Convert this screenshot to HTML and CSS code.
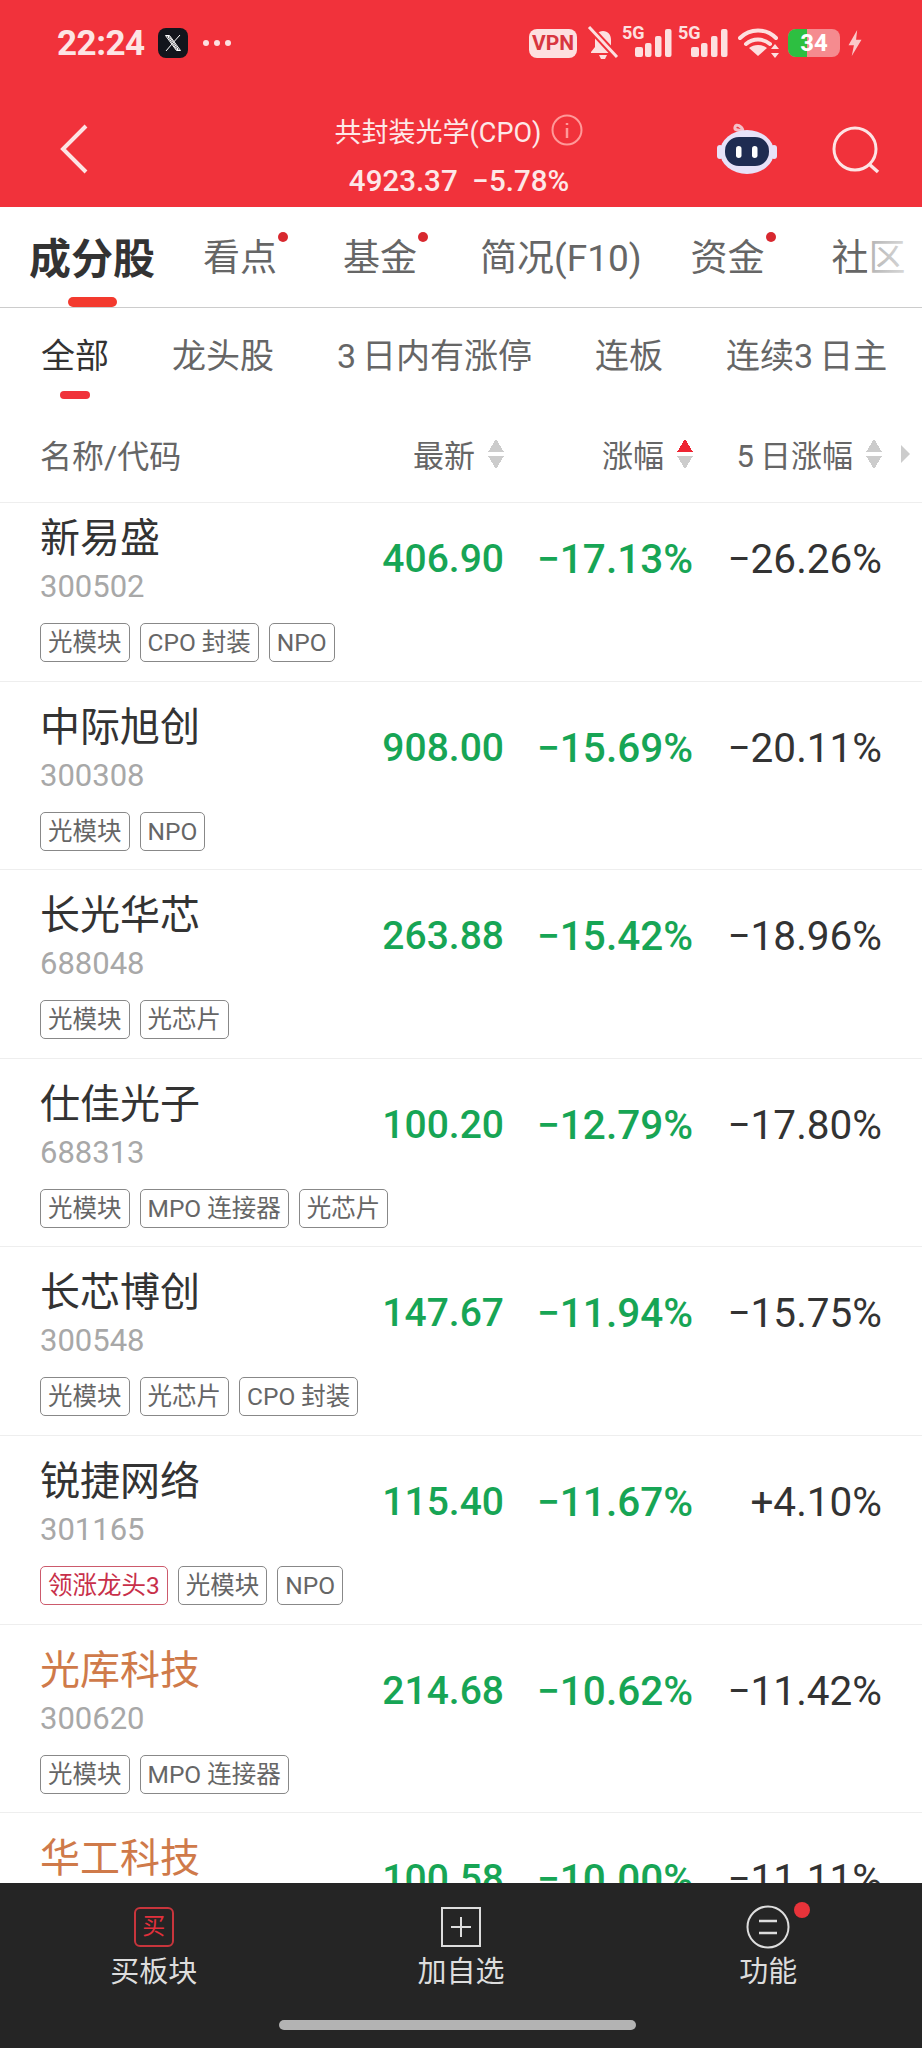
FILE: index.html
```html
<!DOCTYPE html>
<html lang="zh-CN">
<head>
    <meta charset="UTF-8">
    <meta name="viewport" content="width=device-width, initial-scale=1.0">
    <title>共封装光学(CPO)</title>
    <link rel="stylesheet" href="styles.css">
</head>
<body>

<div class="top">
    <!-- Status bar -->
    <div class="status">
        <span class="time">22:24</span>
        <span class="x-icon">
            <svg width="18" height="18" viewBox="0 0 18 18"><path d="M1.500 1.500h4l11 15h-4zM3.800 2.500l8.900 13h1.500L5.300 2.500zM16 1l-6.300 7M7.800 10.200 2 17" fill="none" stroke="#fff" stroke-width="1"/></svg>
        </span>
        <span class="more">
            <i></i><i></i><i></i>
        </span>
        <div class="status-right">
            <span class="vpn">VPN</span>
            <svg class="bell" width="32" height="34" viewBox="0 0 32 34">
                <path d="M16 5c-5 0-8 3.500-8 9v7l-4 5v1h24v-1l-4-5v-7c0-5.500-3-9-8-9z" fill="#fde0e0"/>
                <path d="M12 29h8l-2 4h-4z" fill="#fde0e0"/>
                <path d="M1 0 31 32" stroke="#f1323b" stroke-width="7"/>
                <path d="M2 1 30 31" stroke="#fde0e0" stroke-width="3"/>
            </svg>
            <svg class="signal" width="50" height="34" viewBox="0 0 50 34">
                <text x="0" y="13" class="five-g">5G</text>
                <rect x="13" y="21" width="8" height="10" rx="2"/>
                <rect x="23" y="17" width="6.500" height="14" rx="2"/>
                <rect x="33" y="10" width="6.500" height="21" rx="2"/>
                <rect x="43" y="3" width="6.500" height="28" rx="2"/>
            </svg>
            <svg class="signal" width="50" height="34" viewBox="0 0 50 34">
                <text x="0" y="13" class="five-g">5G</text>
                <rect x="13" y="21" width="8" height="10" rx="2"/>
                <rect x="23" y="17" width="6.500" height="14" rx="2"/>
                <rect x="33" y="10" width="6.500" height="21" rx="2"/>
                <rect x="43" y="3" width="6.500" height="28" rx="2"/>
            </svg>
            <svg class="wifi" width="42" height="30" viewBox="0 0 42 30">
                <path d="M2 10C12 0 28 0 38 10M8 16c7-6 17-6 24 0" fill="none" stroke="#fde0e0" stroke-width="4" stroke-linecap="round"/>
                <path d="M20 28 11 20c5-4 13-4 18 0z" fill="#fde0e0"/>
                <path d="M37 16l4 5h-8zM37 30l4-5h-8z" fill="#fde0e0"/>
            </svg>
            <div class="battery">
                <span class="battery-level"></span>
                <span class="battery-num">34</span>
            </div>
            <svg class="bolt" width="16" height="26" viewBox="0 0 14 24"><path d="M9 0 1 14h5l-2 10 9-15H8z" fill="#fbc8c8"/></svg>
        </div>
    </div>

    <!-- Title bar -->
    <div class="nav">
        <svg class="back" width="28" height="50" viewBox="0 0 28 50"><path d="M26 2 3 25l23 23" fill="none" stroke="#fde4e4" stroke-width="4"/></svg>
        <div class="title">
            <div class="title-name">共封装光学(CPO)
                <svg class="info" width="32" height="32" viewBox="0 0 32 32">
                    <circle cx="16" cy="16" r="14.500" fill="none" stroke="#f99" stroke-width="2"/>
                    <path d="M16 9v2M16 14v10" stroke="#f99" stroke-width="2.500"/>
                </svg>
            </div>
            <div class="title-value">4923.37 &nbsp;−5.78%</div>
        </div>
        <div class="nav-right">
            <svg class="robot" width="64" height="56" viewBox="0 0 64 56">
                <path d="M27 12c-1-5-7-8-8-4s5 3 8 4" fill="none" stroke="#f4c0c8" stroke-width="3"/>
                <rect x="1" y="26" width="6" height="14" rx="3" fill="#e7e2f8"/>
                <rect x="55" y="26" width="6" height="14" rx="3" fill="#e7e2f8"/>
                <ellipse cx="31" cy="33" rx="27" ry="22" fill="#e7e2f8"/>
                <rect x="9" y="18" width="44" height="29" rx="14" fill="#1f2c52"/>
                <rect x="20" y="27" width="5.500" height="12" rx="2.750" fill="#fff"/>
                <rect x="36" y="27" width="5.500" height="12" rx="2.750" fill="#fff"/>
            </svg>
            <svg class="search" width="50" height="50" viewBox="0 0 50 50">
                <circle cx="23" cy="23" r="21" fill="none" stroke="#fde4e4" stroke-width="3"/>
                <path d="M37 38l9 8" stroke="#fde4e4" stroke-width="3.500"/>
            </svg>
        </div>
    </div>
</div>

<!-- Main tabs -->
<div class="tabs">
    <div class="tab tab-active">成分股</div>
    <div class="tab tab-dot">看点</div>
    <div class="tab tab-dot">基金</div>
    <div class="tab">简况(F10)</div>
    <div class="tab tab-dot">资金</div>
    <div class="tab">社区</div>
    <div class="tabs-fade"></div>
</div>

<div class="subtabs">
    <div class="subtab subtab-active">全部</div>
    <div class="subtab">龙头股</div>
    <div class="subtab"><span class="digit">3</span>日内有涨停</div>
    <div class="subtab">连板</div>
    <div class="subtab">连续<span class="digit">3</span>日主</div>
</div>

<!-- Column headers -->
<div class="head">
    <div class="head-name">名称/代码</div>
    <div class="head-col">最新<span class="sort"></span></div>
    <div class="head-col">涨幅<span class="sort sort-up"></span></div>
    <div class="head-col"><div><span class="digit">5</span>日涨幅</div><span class="sort"></span></div>
    <span class="head-more"></span>
</div>

<div class="list">
    <div class="row">
        <div class="stock">
            <div class="name">新易盛</div>
            <div class="code">300502</div>
            <div class="tags"><span class="tag">光模块</span><span class="tag">CPO 封装</span><span class="tag">NPO</span></div>
        </div>
        <div class="num price">406.90</div>
        <div class="num pct">−17.13%</div>
        <div class="num pct5">−26.26%</div>
    </div>
    <div class="row">
        <div class="stock">
            <div class="name">中际旭创</div>
            <div class="code">300308</div>
            <div class="tags"><span class="tag">光模块</span><span class="tag">NPO</span></div>
        </div>
        <div class="num price">908.00</div>
        <div class="num pct">−15.69%</div>
        <div class="num pct5">−20.11%</div>
    </div>
    <div class="row">
        <div class="stock">
            <div class="name">长光华芯</div>
            <div class="code">688048</div>
            <div class="tags"><span class="tag">光模块</span><span class="tag">光芯片</span></div>
        </div>
        <div class="num price">263.88</div>
        <div class="num pct">−15.42%</div>
        <div class="num pct5">−18.96%</div>
    </div>
    <div class="row">
        <div class="stock">
            <div class="name">仕佳光子</div>
            <div class="code">688313</div>
            <div class="tags"><span class="tag">光模块</span><span class="tag">MPO 连接器</span><span class="tag">光芯片</span></div>
        </div>
        <div class="num price">100.20</div>
        <div class="num pct">−12.79%</div>
        <div class="num pct5">−17.80%</div>
    </div>
    <div class="row">
        <div class="stock">
            <div class="name">长芯博创</div>
            <div class="code">300548</div>
            <div class="tags"><span class="tag">光模块</span><span class="tag">光芯片</span><span class="tag">CPO 封装</span></div>
        </div>
        <div class="num price">147.67</div>
        <div class="num pct">−11.94%</div>
        <div class="num pct5">−15.75%</div>
    </div>
    <div class="row">
        <div class="stock">
            <div class="name">锐捷网络</div>
            <div class="code">301165</div>
            <div class="tags"><span class="tag tag-red">领涨龙头3</span><span class="tag">光模块</span><span class="tag">NPO</span></div>
        </div>
        <div class="num price">115.40</div>
        <div class="num pct">−11.67%</div>
        <div class="num pct5">+4.10%</div>
    </div>
    <div class="row">
        <div class="stock">
            <div class="name name-hot">光库科技</div>
            <div class="code">300620</div>
            <div class="tags"><span class="tag">光模块</span><span class="tag">MPO 连接器</span></div>
        </div>
        <div class="num price">214.68</div>
        <div class="num pct">−10.62%</div>
        <div class="num pct5">−11.42%</div>
    </div>
    <div class="row">
        <div class="stock">
            <div class="name name-hot">华工科技</div>
        </div>
        <div class="num price">100.58</div>
        <div class="num pct">−10.00%</div>
        <div class="num pct5">−11.11%</div>
    </div>
</div>

<!-- Bottom bar -->
<div class="bottom">
    <div class="bottom-items">
        <div class="bottom-item">
            <div class="buy-icon">买</div>
            <div class="bottom-label">买板块</div>
        </div>
        <div class="bottom-item">
            <svg class="bottom-icon" width="40" height="40" viewBox="0 0 40 40">
                <rect x="1" y="1" width="38" height="38" fill="none" stroke="#ddd" stroke-width="2"/>
                <path d="M20 10v20M10 20h20" stroke="#ddd" stroke-width="2"/>
            </svg>
            <div class="bottom-label">加自选</div>
        </div>
        <div class="bottom-item bottom-item-dot">
            <svg class="bottom-icon bottom-icon-round" width="44" height="44" viewBox="0 0 44 44">
                <circle cx="22" cy="22" r="20.500" fill="none" stroke="#ddd" stroke-width="2"/>
                <path d="M13 16h18M13 28h18" stroke="#ddd" stroke-width="2.500"/>
            </svg>
            <div class="bottom-label">功能</div>
        </div>
    </div>
    <div class="home-pill"></div>
</div>

</body>
</html>
```

FILE: styles.css
```css
* {
    box-sizing: border-box;
}
body {
    margin: 0;
    width: 922px;
    height: 2048px;
    overflow: hidden;
    display: flex;
    flex-direction: column;
    background-color: #fff;
    font-family: Roboto, "Noto Sans CJK SC", sans-serif;
    color: #333;
}
.digit {
    margin-right: 6px;
}

/* Red header */
.top {
    height: 207px;
    flex: none;
    background-color: #f1323b;
    color: #fde8e8;
}
.status {
    height: 86px;
    display: flex;
    align-items: center;
    padding: 0 59px 0 57px;
}
.time {
    font-size: 35px;
    font-weight: 700;
    letter-spacing: -0.5px;
    color: #fde4e4;
}
.x-icon {
    width: 30px;
    height: 30px;
    margin-left: 13px;
    border-radius: 8px;
    background-color: #12151c;
    display: flex;
    align-items: center;
    justify-content: center;
}
.more {
    display: flex;
    gap: 5px;
    margin-left: 15px;
}
.more i {
    width: 6px;
    height: 6px;
    border-radius: 50%;
    background-color: #fde0e0;
}
.status-right {
    margin-left: auto;
    display: flex;
    align-items: center;
}
.vpn {
    width: 48px;
    height: 29px;
    border-radius: 8px;
    background-color: #fde0e0;
    color: #d8353f;
    font-size: 21px;
    font-weight: 700;
    line-height: 29px;
    text-align: center;
}
.bell {
    margin-left: 10px;
}
.signal {
    margin-left: 3px;
    fill: #fde0e0;
    overflow: visible;
}
.signal + .signal {
    margin-left: 6px;
}
.five-g {
    font-family: Roboto, sans-serif;
    font-size: 18px;
    font-weight: 700;
}
.wifi {
    margin-left: 10px;
}
.battery {
    position: relative;
    width: 52px;
    height: 28px;
    margin-left: 8px;
    border-radius: 8px;
    background-color: #f58b8f;
    overflow: hidden;
}
.battery-level {
    position: absolute;
    left: 0;
    top: 0;
    bottom: 0;
    width: 19px;
    background-color: #2dbf41;
}
.battery-num {
    position: absolute;
    left: 0;
    right: 0;
    top: 0;
    text-align: center;
    font-size: 24px;
    font-weight: 700;
    line-height: 28px;
    color: #fff;
}
.bolt {
    margin-left: 7px;
}

.nav {
    height: 121px;
    display: grid;
    grid-template-columns: 200px 1fr 200px;
    align-items: start;
}
.back {
    margin: 38px 0 0 60px;
}
.title {
    padding: 26px 4px 0 0;
    text-align: center;
}
.title-name {
    height: 36px;
    display: flex;
    align-items: center;
    justify-content: center;
    gap: 10px;
    font-size: 27px;
}
.title-value {
    margin-top: 15px;
    font-size: 29.5px;
    font-weight: 500;
    line-height: 36px;
}
.nav-right {
    display: flex;
    align-items: flex-start;
    padding: 33px 0 0 0;
}
.robot {
    margin: 0 0 0 -6px;
}
.search {
    margin: 7px 0 0 52px;
}

/* Tabs */
.tabs {
    position: relative;
    flex: none;
    height: 101px;
    display: flex;
    padding-left: 29px;
    border-bottom: 1.5px solid #ccc;
    overflow: hidden;
}
.tab {
    position: relative;
    display: flex;
    align-items: center;
    flex: none;
    padding-bottom: 4px;
    font-size: 37px;
    color: #666;
}
.tab:nth-child(2) { margin-left: 48px; }
.tab:nth-child(3) { margin-left: 66px; }
.tab:nth-child(4) { margin-left: 63px; }
.tab:nth-child(5) { margin-left: 49px; }
.tab:nth-child(6) { margin-left: 67px; }
.tab-active {
    font-size: 42px;
    font-weight: 700;
    color: #333;
}
.tab-active::after {
    content: "";
    position: absolute;
    left: 39px;
    bottom: 0;
    width: 49px;
    height: 10px;
    border-radius: 5px;
    background-color: #f33a2e;
}
.tab-dot::after {
    content: "";
    position: absolute;
    right: -11px;
    top: 25px;
    width: 10px;
    height: 10px;
    border-radius: 50%;
    background-color: #d8282f;
}
.tabs-fade {
    position: absolute;
    right: 0;
    top: 0;
    bottom: 0;
    width: 55px;
    background: linear-gradient(to right, rgba(255,255,255,0.5), rgba(255,255,255,0.85));
}

.subtabs {
    flex: none;
    height: 100px;
    display: flex;
    gap: 63px;
    padding: 0 0 0 41px;
    overflow: hidden;
}
.subtab {
    position: relative;
    flex: none;
    font-size: 34px;
    line-height: 96px;
    color: #666;
}
.subtab-active {
    color: #333;
}
.subtab-active::after {
    content: "";
    position: absolute;
    left: 19px;
    top: 83px;
    width: 30px;
    height: 8px;
    border-radius: 4px;
    background-color: #f0323a;
}

/* Column headers */
.head {
    flex: none;
    height: 95px;
    display: flex;
    align-items: center;
    padding: 0 12px 3px 40px;
    border-bottom: 1.5px solid #eee;
    font-size: 31px;
    color: #666;
}
.head-name {
    flex: 1;
    font-size: 32px;
}
.head-col {
    display: flex;
    align-items: center;
    justify-content: flex-end;
    gap: 13px;
    width: 189px;
}
.sort {
    width: 16px;
    height: 30px;
    flex: none;
    background:
        linear-gradient(to top right, transparent 50%, #ccc 50%) 0 100% / 8px 13px no-repeat,
        linear-gradient(to top left, transparent 50%, #ccc 50%) 100% 100% / 8px 13px no-repeat,
        linear-gradient(to bottom right, transparent 50%, #ccc 50%) 0 0 / 8px 13px no-repeat,
        linear-gradient(to bottom left, transparent 50%, #ccc 50%) 100% 0 / 8px 13px no-repeat;
}
.sort-up {
    background:
        linear-gradient(to top right, transparent 50%, #ccc 50%) 0 100% / 8px 13px no-repeat,
        linear-gradient(to top left, transparent 50%, #ccc 50%) 100% 100% / 8px 13px no-repeat,
        linear-gradient(to bottom right, transparent 50%, #ee2533 50%) 0 0 / 8px 13px no-repeat,
        linear-gradient(to bottom left, transparent 50%, #ee2533 50%) 100% 0 / 8px 13px no-repeat;
}
.head-more {
    flex: none;
    margin-left: 19px;
    width: 0;
    height: 0;
    border-left: 9px solid #ccc;
    border-top: 9px solid transparent;
    border-bottom: 9px solid transparent;
}

/* Stock rows */
.list {
    flex: 1;
    min-height: 0;
    overflow: hidden;
}
.row {
    height: 188.6px;
    display: flex;
    padding: 0 40px;
    border-bottom: 1.5px solid #eee;
}
.row:first-child {
    margin-top: -10px;
}
.stock {
    flex: 1;
    min-width: 0;
    padding-top: 24px;
}
.name {
    font-size: 40px;
    line-height: 44px;
    color: #333;
}
.name-hot {
    color: #cf7a4a;
}
.code {
    margin-top: 8px;
    font-size: 31px;
    line-height: 36px;
    color: #a8a8a8;
}
.tags {
    display: flex;
    gap: 10px;
    margin-top: 18px;
}
.tag {
    height: 39px;
    padding: 0 7px;
    border: 1px solid #888;
    border-radius: 5px;
    font-size: 24.5px;
    line-height: 37px;
    color: #666;
    white-space: nowrap;
}
.tag-red {
    border-color: #cc5a6c;
    color: #c8304a;
}
.num {
    flex: none;
    width: 189px;
    margin-top: 44px;
    font-size: 39px;
    font-weight: 500;
    line-height: 44px;
    text-align: right;
    color: #333;
}
.pct, .pct5 {
    font-size: 40.5px;
}
.price, .pct {
    color: #17a555;
}
.pct5 {
    font-weight: 400;
}

/* Bottom bar */
.bottom {
    flex: none;
    height: 165px;
    background-color: #252525;
}
.bottom-items {
    display: grid;
    grid-template-columns: repeat(3, 1fr);
    height: 134px;
    padding-top: 24px;
}
.bottom-item {
    position: relative;
    display: flex;
    flex-direction: column;
    align-items: center;
}
.bottom-icon-round {
    margin: -2px 0;
}
.bottom-item-dot::after {
    content: "";
    position: absolute;
    left: 179px;
    top: -5px;
    width: 16px;
    height: 16px;
    border-radius: 50%;
    background-color: #e8333a;
}
.buy-icon {
    width: 40px;
    height: 40px;
    border: 2px solid #c8353c;
    border-radius: 6px;
    font-size: 23px;
    line-height: 35px;
    text-align: center;
    color: #e2303c;
}
.bottom-label {
    margin-top: 7px;
    font-size: 29px;
    line-height: 36px;
    color: #ddd;
}
.home-pill {
    width: 357px;
    height: 10px;
    margin: 3px 0 0 279px;
    border-radius: 5px;
    background-color: #b3b3b3;
}
```
